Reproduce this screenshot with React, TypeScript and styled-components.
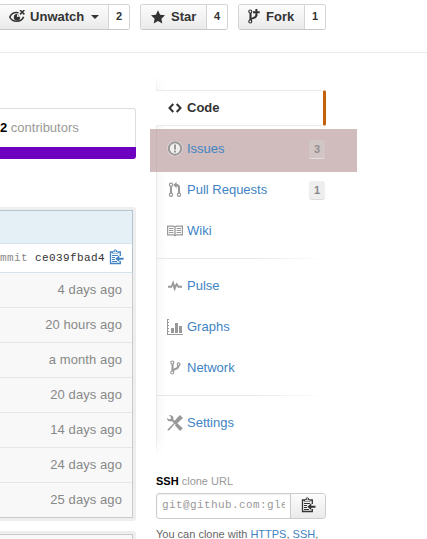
import React from "react";
import styled, { createGlobalStyle, css } from "styled-components";

const GlobalStyle = createGlobalStyle`
  * { box-sizing: border-box; }
  body {
    margin: 0;
    background: #fff;
    color: #333;
    font: 13px/18px "Liberation Sans", Arial, sans-serif;
    overflow: hidden;
  }
`;

const Page = styled.div`
  width: 427px;
  height: 539px;
  overflow: hidden;
`;

const Header = styled.header`
  height: 53px;
  padding-top: 4px;
  display: flex;
  align-items: flex-start;
  border-bottom: 1px solid #eaeaea;
`;

const ButtonGroup = styled.div<{ $width: number; $gap: number }>`
  display: flex;
  flex: none;
  width: ${(p) => p.$width}px;
  height: 26px;
  margin-left: ${(p) => p.$gap}px;
  border: 1px solid #d4d4d4;
  border-bottom-color: #c8c8c8;
  border-radius: 3px;
  overflow: hidden;
  font-weight: bold;
`;

const ActionButton = styled.div<{ $pad: number }>`
  flex: 1;
  display: flex;
  align-items: center;
  padding-left: ${(p) => p.$pad}px;
  background: linear-gradient(#fcfcfc, #eaeaea);
  color: #333;
  white-space: nowrap;
`;

const Count = styled.div`
  width: 21px;
  border-left: 1px solid #d4d4d4;
  background: #fff;
  text-align: center;
  font-size: 11px;
  line-height: 23px;
`;

const Caret = styled.span`
  margin-left: 7px;
  border: 4px solid transparent;
  border-top-color: #333;
  border-bottom: 0;
`;

const Icon = styled.svg<{ $w?: number; $h?: number; $mr?: number }>`
  display: block;
  flex: none;
  width: ${(p) => p.$w ?? 16}px;
  height: ${(p) => p.$h ?? 16}px;
  margin-right: ${(p) => p.$mr ?? 0}px;
  fill: currentColor;
`;

const Columns = styled.div`
  display: flex;
`;

const Main = styled.main`
  width: 136px;
  padding-top: 55px;
`;

const Summary = styled.div`
  height: 39px;
  border: 1px solid #ddd;
  border-width: 1px 1px 0 0;
  border-top-right-radius: 3px;
  line-height: 38px;
  color: #999;

  b { color: #000; }
`;

const LanguageBar = styled.div`
  height: 12px;
  background: #6e00bf;
  border-bottom-right-radius: 3px;
`;

const Bubble = styled.div<{ $top: number }>`
  margin-top: ${(p) => p.$top}px;
  padding: 3px 3px 3px 0;
  background: #eee;
  border-radius: 0 3px 3px 0;
`;

const FileTable = styled.div`
  border: 1px solid #cacaca;
  border-left: 0;
  background: #f8f8f8;
`;

const CommitTitle = styled.div`
  height: 33px;
  margin: -1px -1px 0 0;
  border: 1px solid #b3c6cf;
  border-width: 1px 1px 0 0;
  background: #e4f0f5;
`;

const CommitMeta = styled.div`
  height: 30px;
  margin-right: -1px;
  padding: 0 8px 2px 0;
  display: flex;
  align-items: center;
  justify-content: flex-end;
  border: 1px solid #d3e4ec;
  border-right-color: #b3c6cf;
  border-left: 0;
  background: #fff;
  color: #4183c4;
  white-space: nowrap;
`;

const Sha = styled.span`
  margin: 2px 4px 0 0;
  font: 11px/16px "Liberation Mono", monospace;
  color: #888;
  letter-spacing: 0.4px;

  b { font-weight: normal; color: #333; }
`;

const Age = styled.div`
  height: 35px;
  padding-right: 10px;
  text-align: right;
  line-height: 33px;
  letter-spacing: 0.08px;
  color: #888;
  border-bottom: 1px solid #e6e6e6;

  &:last-child {
    height: 34px;
    border-bottom: 0;
  }
`;

const Side = styled.aside`
  width: 170px;
  margin-left: 20px;
  padding-top: 22px;
`;

const Nav = styled.nav`
  height: 381px;
  padding-top: 15px;
  background:
    linear-gradient(#fff, transparent 18px calc(100% - 18px), #fff),
    linear-gradient(90deg, #e9e9e9 1px, #f8f8f8 1px, #fff 10px);
`;

const active = css`
  border: 1px solid #eaeaea;
  border-left: 0;
  border-right: 3px solid #c4620c;
  border-radius: 0 2px 2px 0;
  background: #fff;
  color: #333;
  font-weight: bold;
`;

const NavItem = styled.div<{ $active?: boolean }>`
  position: relative;
  height: 36px;
  margin-bottom: 5px;
  padding-left: 11px;
  display: flex;
  align-items: center;
  color: #4183c4;
  ${(p) => p.$active && active}
`;

const Highlight = styled.span`
  position: absolute;
  left: -6px;
  top: -2px;
  width: 207px;
  height: 43px;
  background: linear-gradient(90deg, transparent 6px, #c8b5b5 6px, #c8b5b5 7px, transparent 7px), #d0bcbc;
`;

const NavIcon = styled.span<{ $dark?: boolean }>`
  position: relative;
  display: flex;
  justify-content: center;
  width: 16px;
  margin-right: 4px;
  color: ${(p) => (p.$dark ? "#333" : "#999")};
`;

const Label = styled.span`
  position: relative;
`;

const Badge = styled.span<{ $tinted?: boolean }>`
  position: relative;
  width: 16px;
  height: 19px;
  margin: 1px 1px 0 auto;
  border-bottom: 1px solid ${(p) => (p.$tinted ? "#e6dfdf" : "#ddd")};
  border-radius: 3px;
  background: ${(p) => (p.$tinted ? "#d2c5c5" : "#eee")};
  color: ${(p) => (p.$tinted ? "#938e8e" : "#888")};
  text-align: center;
  font: bold 11px/18px "Liberation Sans", Arial, sans-serif;
`;

const Separator = styled.div`
  height: 1px;
  margin: 9px 0;
  background: linear-gradient(90deg, #e7e7e7 55%, #fff);
`;

const Clone = styled.section`
  padding-top: 16px;
  font-size: 11px;
  line-height: 18px;
  color: #999;

  b { color: #000; }
`;

const CloneField = styled.div`
  display: flex;
  height: 26px;
  margin: 3px 0 6px;
  border: 1px solid #ccc;
  border-radius: 3px;
  overflow: hidden;
`;

const Url = styled.div`
  width: 134px;
  padding: 0 5px;
  border-right: 1px solid #ccc;
  box-shadow: inset 0 1px 2px #eee;

  span {
    display: block;
    overflow: hidden;
    white-space: nowrap;
    font: 11px/23px "Liberation Mono", monospace;
    letter-spacing: 0.4px;
  }
`;

const CopyButton = styled.div`
  flex: 1;
  display: flex;
  align-items: center;
  justify-content: center;
  padding-bottom: 2px;
  background: linear-gradient(#fcfcfc, #eaeaea);
  color: #333;
`;

const Hint = styled.p`
  margin: 0;
  color: #666;
  white-space: nowrap;

  a { color: #4183c4; }
`;

const EyeIcon = () => (
  <Icon viewBox="0 0 16 14" $h={14} $mr={4}>
    <path d="M9.5 2.8C4.8 1.3 1.8 4.8.8 7c1.2 2.8 3.8 4.2 6.8 4.2 3.4 0 6-1.5 7-4.4" fill="none" stroke="currentColor" strokeWidth="1.6" />
    <path d="M8 4a3.2 3.2 0 1 0 3.2 3.2H8z" />
    <circle cx="8" cy="7" r="2.4" />
    <circle cx="8.8" cy="6" r="1" fill="#fff" />
    <path d="m11 0 4.4 4.4m0-4.4L11 4.4" fill="none" stroke="currentColor" strokeWidth="1.5" />
  </Icon>
);

const StarIcon = () => (
  <Icon viewBox="0 0 14 14" $w={14} $h={14} $mr={6}>
    <path d="M14 5.3 9.1 4.7 7 .2 4.9 4.7 0 5.3l3.6 3.4-.9 4.8L7 11.1l4.3 2.4-.9-4.8z" />
  </Icon>
);

const BranchShape = () => (
  <g fill="none" stroke="currentColor">
    <circle cx="2.3" cy="2.5" r="1.5" strokeWidth="1.2" />
    <circle cx="2.3" cy="12.5" r="1.5" strokeWidth="1.2" />
    <path d="M2.5 4v7" strokeWidth="2.1" />
  </g>
);

const ForkIcon = () => (
  <Icon viewBox="0 0 12 17" $w={12} $h={17} $mr={6}>
    <BranchShape />
    <path d="M2.5 10.8c.7-2.3 6-1 6-5.1" fill="none" stroke="currentColor" strokeWidth="2" />
    <path d="M7.4 0h2v2.3h2.3v1.9H9.4v2.3h-2V4.2H5V2.3h2.4z" />
  </Icon>
);

const BranchIcon = () => (
  <Icon viewBox="0 0 11 16" $w={11}>
    <BranchShape />
    <g fill="none" stroke="currentColor">
      <circle cx="8.6" cy="4.3" r="1.4" strokeWidth="1.2" />
      <path d="M2.5 10.8c.7-2 5.8-1 5.9-5" strokeWidth="2.1" />
    </g>
  </Icon>
);

const ClipboardIcon = () => (
  <Icon viewBox="0 0 15 16" $w={15}>
    <path d="M3 3H1.5v11.5h9.8V12M9.5 3h1.8v4" fill="none" stroke="currentColor" strokeWidth="1.3" />
    <path d="M3 4.6V2.3h1.6C4.6 1 5.2.5 6.3.5S8 1 8 2.3h1.6v2.3zM3 6h6v1H3zm0 2h3v1H3zm0 2h3v1H3zm0 2h5v1H3z" />
    <path d="M4 3h4.6v1H4z" fill="#fff" fillOpacity=".85" />
    <circle cx="6.3" cy="2" r=".8" fill="#fff" />
    <path d="m10.3 6.2-4 3.5 4 3.4v-2.4h4.2v-2h-4.2z" />
  </Icon>
);

const CodeIcon = () => (
  <Icon viewBox="0 0 14 10" $w={14} $h={10}>
    <path d="M5.3 1 1.5 5l3.8 4M8.7 1l3.8 4-3.8 4" fill="none" stroke="currentColor" strokeWidth="2" />
  </Icon>
);

const IssueIcon = () => (
  <Icon viewBox="0 0 16 16">
    <circle cx="8" cy="7.5" r="6.6" fill="#f2eeee" stroke="#fff" strokeOpacity=".5" strokeWidth="2.4" />
    <circle cx="8" cy="7.5" r="6.2" fill="none" stroke="currentColor" strokeWidth="2" />
    <path d="M7 3.5h2v5H7zM7 9.5h2v2H7z" />
  </Icon>
);

const PullIcon = () => (
  <Icon viewBox="0 0 14 16" $w={14}>
    <g fill="none" stroke="currentColor">
      <circle cx="3" cy="2.7" r="1.6" strokeWidth="1.2" />
      <circle cx="3" cy="12.7" r="1.6" strokeWidth="1.2" />
      <circle cx="11" cy="12.7" r="1.6" strokeWidth="1.2" />
      <path d="M3 4.5v7M11 11.2V5.3c0-1.4-.8-2.2-2.5-2.2H7.8" strokeWidth="2.1" />
    </g>
    <path d="M8.6 0v6.2L5.2 3.1z" />
  </Icon>
);

const WikiIcon = () => (
  <Icon viewBox="0 0 16 12" $h={12}>
    <path d="M.6 1.2h5.8L8 2.1l1.6-.9h5.8v8.6H9.6L8 10.7l-1.6-.9H.6zM8 2v8.5" fill="none" stroke="currentColor" strokeWidth="1.3" />
    <path d="M2 3.5h4.4M2 5.5h4.4M2 7.5h4.4M9.6 3.5H14M9.6 5.5H14M9.6 7.5H14" stroke="currentColor" />
  </Icon>
);

const PulseIcon = () => (
  <Icon viewBox="0 0 14 12" $w={14} $h={12}>
    <path d="M0 5.8h3L5.2.2l1.6 5.2 1.9-3 2 3.4H14v1.9h-4L8.8 5.9 6.5 11.6l-1.8-6-.7 2.1H0z" />
  </Icon>
);

const GraphIcon = () => (
  <Icon viewBox="0 0 16 16">
    <path d="M0 0h1v15h15v1H0zM1 0h1v1H1zM1 3h1v1H1zM1 6h1v1H1zM1 9h1v1H1zM1 12h1v1H1zM4 9h3v5H4zM8 4h3v10H8zM12 7h3v7h-3z" />
  </Icon>
);

const ToolsIcon = () => (
  <Icon viewBox="0 0 16 16">
    <path d="M.2 3.1 2.4 4.6 4 3.6 3.8 1.7 1.9.6C4.7-.5 7.2 1.6 6.3 4.5l2 2-1.6 1.6-2.1-2C2.2 7-.3 5.4.2 3.1zM10 8l5.8 5.3-2.8 2.6-5.2-5.7zM12.8 0 16 3.1 9.3 9.3l-1.5-.2-5.6 6.2-1.7.5.4-1.8L7 8.1l-.1-1.7z" />
  </Icon>
);

const ages = ["4 days ago", "20 hours ago", "a month ago", "20 days ago", "14 days ago", "24 days ago", "25 days ago"];

interface EntryProps {
  icon: React.ReactNode;
  label: string;
  current?: boolean;
  highlighted?: boolean;
  count?: number;
}

const Entry = ({ icon, label, current, highlighted, count }: EntryProps) => (
  <NavItem $active={current}>
    {highlighted && <Highlight />}
    <NavIcon $dark={current}>{icon}</NavIcon>
    <Label>{label}</Label>
    {count !== undefined && <Badge $tinted={highlighted}>{count}</Badge>}
  </NavItem>
);

export default function App() {
  return (
    <Page>
      <GlobalStyle />
      <Header>
        <ButtonGroup $width={132} $gap={-2}>
          <ActionButton $pad={10}><EyeIcon />&#8202;Unwatch<Caret /></ActionButton>
          <Count>2</Count>
        </ButtonGroup>
        <ButtonGroup $width={88} $gap={10}>
          <ActionButton $pad={10}><StarIcon />Star</ActionButton>
          <Count>4</Count>
        </ButtonGroup>
        <ButtonGroup $width={88} $gap={10}>
          <ActionButton $pad={9}><ForkIcon />Fork</ActionButton>
          <Count>1</Count>
        </ButtonGroup>
      </Header>
      <Columns>
        <Main>
          <Summary><b>2</b> contributors</Summary>
          <LanguageBar />
          <Bubble $top={48}>
            <FileTable>
              <CommitTitle />
              <CommitMeta>
                <Sha>commit <b>ce039fbad4</b></Sha>
                <ClipboardIcon />
              </CommitMeta>
              {ages.map((age) => <Age key={age}>{age}</Age>)}
            </FileTable>
          </Bubble>
          <Bubble $top={10}>
            <FileTable><Age /></FileTable>
          </Bubble>
        </Main>
        <Side>
          <Nav>
            <Entry icon={<CodeIcon />} label="Code" current />
            <Entry icon={<IssueIcon />} label="Issues" highlighted count={3} />
            <Entry icon={<PullIcon />} label="Pull Requests" count={1} />
            <Entry icon={<WikiIcon />} label="Wiki" />
            <Separator />
            <Entry icon={<PulseIcon />} label="Pulse" />
            <Entry icon={<GraphIcon />} label="Graphs" />
            <Entry icon={<BranchIcon />} label="Network" />
            <Separator />
            <Entry icon={<ToolsIcon />} label="Settings" />
          </Nav>
          <Clone>
            <div><b>SSH</b> clone URL</div>
            <CloneField>
              <Url><span>git@github.com:glebm</span></Url>
              <CopyButton><ClipboardIcon /></CopyButton>
            </CloneField>
            <Hint>You can clone with <a>HTTPS</a>, <a>SSH</a>,</Hint>
          </Clone>
        </Side>
      </Columns>
    </Page>
  );
}
